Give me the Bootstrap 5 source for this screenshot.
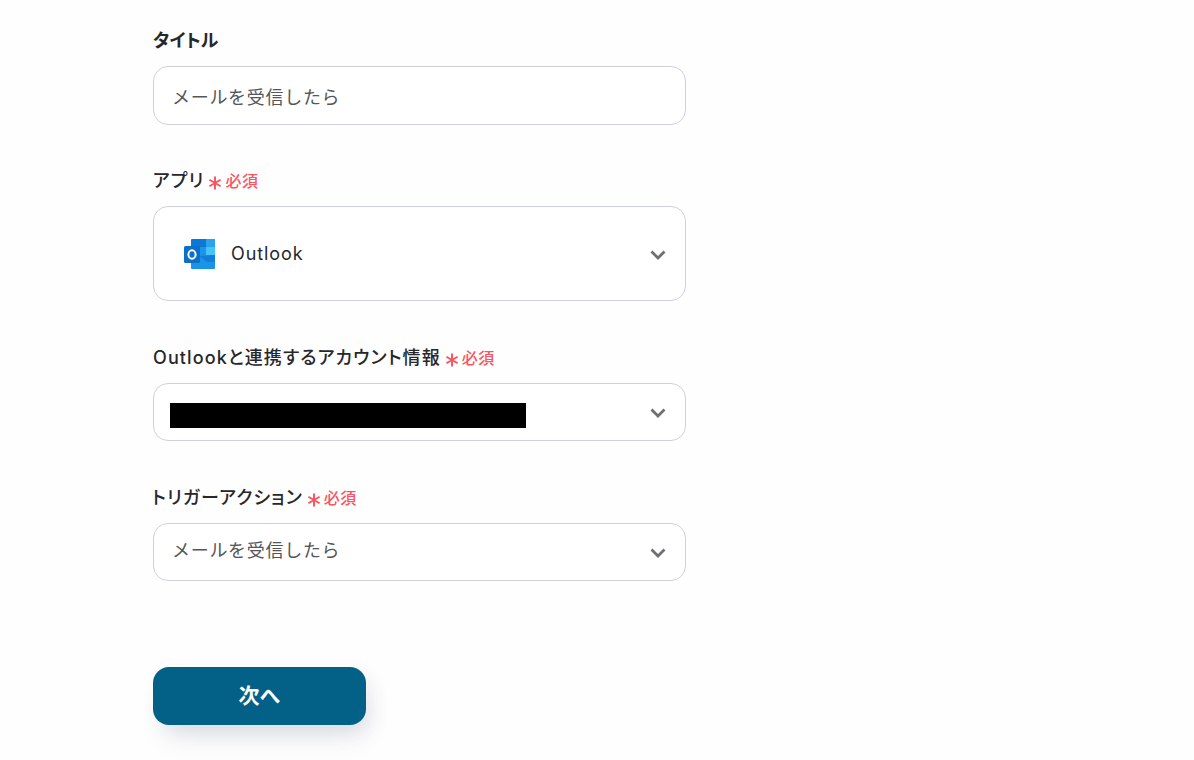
<!DOCTYPE html>
<html lang="ja">
  <head>
    <meta charset="UTF-8" />
    <meta name="viewport" content="width=device-width, initial-scale=1.0" />
    <title>トリガー設定</title>
    <link href="https://cdn.jsdelivr.net/npm/bootstrap@5.3.0/dist/css/bootstrap.min.css" rel="stylesheet" />
    <style>
      body {
        background: #fefefe;
        font-family: Inter, "Noto Sans CJK JP", sans-serif;
        color: #212529;
      }
      .page-wrap {
        width: 533px;
        margin-left: 153px;
        padding-top: 29px;
        padding-bottom: 35px;
      }
      .field-group {
        margin-bottom: 45px;
      }
      .field-group.first-group {
        margin-bottom: 44px;
      }
      .field-label {
        display: flex;
        align-items: center;
        height: 24px;
        margin-bottom: 13px;
        font-size: 18px;
        font-weight: 500;
        letter-spacing: 1.1px;
        line-height: 24px;
        color: #26272b;
        font-feature-settings: "palt";
      }
      .field-label.title-label {
        font-weight: 700;
        letter-spacing: 0;
      }
      .field-label.pull-left {
        margin-left: -1px;
      }
      .req-mark {
        display: inline-flex;
        align-items: center;
        margin-left: 4px;
        font-size: 16px;
        font-weight: 500;
        letter-spacing: 0.5px;
        color: #f9545f;
        font-feature-settings: normal;
      }
      .req-mark svg {
        margin-right: 3px;
        margin-top: 4px;
      }
      .field-box {
        display: flex;
        align-items: center;
        justify-content: space-between;
        height: 58px;
        padding: 0 19px;
        border: 1px solid #cfd0de;
        border-radius: 15px;
        background: #fff;
        font-size: 18px;
        letter-spacing: 0.7px;
        color: #55565a;
        box-shadow: none;
      }
      .field-box:focus {
        border-color: #cfd0de;
        box-shadow: none;
      }
      .title-input {
        height: 59px;
        padding-left: 18px;
      }
      .app-box {
        height: 95px;
        padding-left: 29px;
      }
      .app-name {
        margin-left: 15px;
        font-size: 18px;
        letter-spacing: 0.9px;
        color: #26272b;
      }
      .mask-bar {
        width: 356px;
        height: 25px;
        margin: 7px 0 0 -3px;
        background: #000;
      }
      .select-text {
        margin: -3px 0 0 -1px;
      }
      .chevron {
        flex: none;
        margin-top: 2px;
      }
      .next-btn {
        display: block;
        width: 213px;
        height: 58px;
        margin-top: 86px;
        border: 0;
        border-radius: 16px;
        background: #036087;
        font-size: 21px;
        font-weight: 700;
        color: #fff;
        box-shadow: 6px 6px 18px rgba(70, 80, 110, 0.08), 6px 20px 26px -8px rgba(70, 80, 110, 0.13);
      }
      .next-btn:hover {
        background: #036087;
        color: #fff;
      }
    </style>
  </head>
  <body>
    <div class="page-wrap">
      <div class="field-group first-group">
        <label class="field-label title-label" for="title-input">タイトル</label>
        <input id="title-input" class="form-control field-box title-input" type="text" value="メールを受信したら" />
      </div>

      <div class="field-group">
        <div class="field-label">アプリ
          <span class="req-mark">
            <svg width="14" height="14" viewBox="0 0 13 13"><path d="M6.5 0.5v12M1.3 3.5l10.4 6M11.7 3.5l-10.4 6" stroke="#f9545f" stroke-width="1.8" fill="none" /></svg>必須
          </span>
        </div>
        <div class="field-box app-box">
          <div class="d-flex align-items-center">
            <svg width="33" height="32" viewBox="0 0 33 32">
              <rect x="8" y="1" width="24" height="17" rx="1" fill="#0a78d6" />
              <rect x="23" y="1" width="9" height="8" rx="1" fill="#2aa3ee" />
              <rect x="16" y="9" width="7" height="8" fill="#1f93e6" />
              <rect x="23" y="9" width="9" height="9" fill="#45c4f5" />
              <path d="M8 17 32 17v13a1 1 0 0 1-1 1H9a1 1 0 0 1-1-1z" fill="#1a94e6" />
              <path d="M32 17v7l-8 0-8-6z" fill="#0f78d4" opacity="0.75" />
              <rect x="1" y="8" width="16" height="17" rx="1.500" fill="#0c70c8" />
              <ellipse cx="9" cy="16.500" rx="3.600" ry="4.200" fill="none" stroke="#fff" stroke-width="2" />
            </svg>
            <span class="app-name">Outlook</span>
          </div>
          <svg class="chevron" width="16" height="10" viewBox="0 0 16 10"><path d="M1.500 1.500 8 8l6.500-6.500" fill="none" stroke="#6e6e73" stroke-width="2.800" /></svg>
        </div>
      </div>

      <div class="field-group">
        <div class="field-label">Outlookと連携するアカウント情報
          <span class="req-mark">
            <svg width="14" height="14" viewBox="0 0 13 13"><path d="M6.5 0.5v12M1.3 3.5l10.4 6M11.7 3.5l-10.4 6" stroke="#f9545f" stroke-width="1.8" fill="none" /></svg>必須
          </span>
        </div>
        <div class="field-box">
          <div class="mask-bar"></div>
          <svg class="chevron" width="16" height="10" viewBox="0 0 16 10"><path d="M1.500 1.500 8 8l6.500-6.500" fill="none" stroke="#6e6e73" stroke-width="2.800" /></svg>
        </div>
      </div>

      <div class="field-group">
        <div class="field-label pull-left">トリガーアクション
          <span class="req-mark">
            <svg width="14" height="14" viewBox="0 0 13 13"><path d="M6.5 0.5v12M1.3 3.5l10.4 6M11.7 3.5l-10.4 6" stroke="#f9545f" stroke-width="1.8" fill="none" /></svg>必須
          </span>
        </div>
        <div class="field-box">
          <span class="select-text">メールを受信したら</span>
          <svg class="chevron" width="16" height="10" viewBox="0 0 16 10"><path d="M1.500 1.500 8 8l6.500-6.500" fill="none" stroke="#6e6e73" stroke-width="2.800" /></svg>
        </div>
      </div>

      <button class="btn next-btn" type="button">次へ</button>
    </div>
    <script src="https://cdn.jsdelivr.net/npm/bootstrap@5.3.0/dist/js/bootstrap.bundle.min.js"></script>
  </body>
</html>
